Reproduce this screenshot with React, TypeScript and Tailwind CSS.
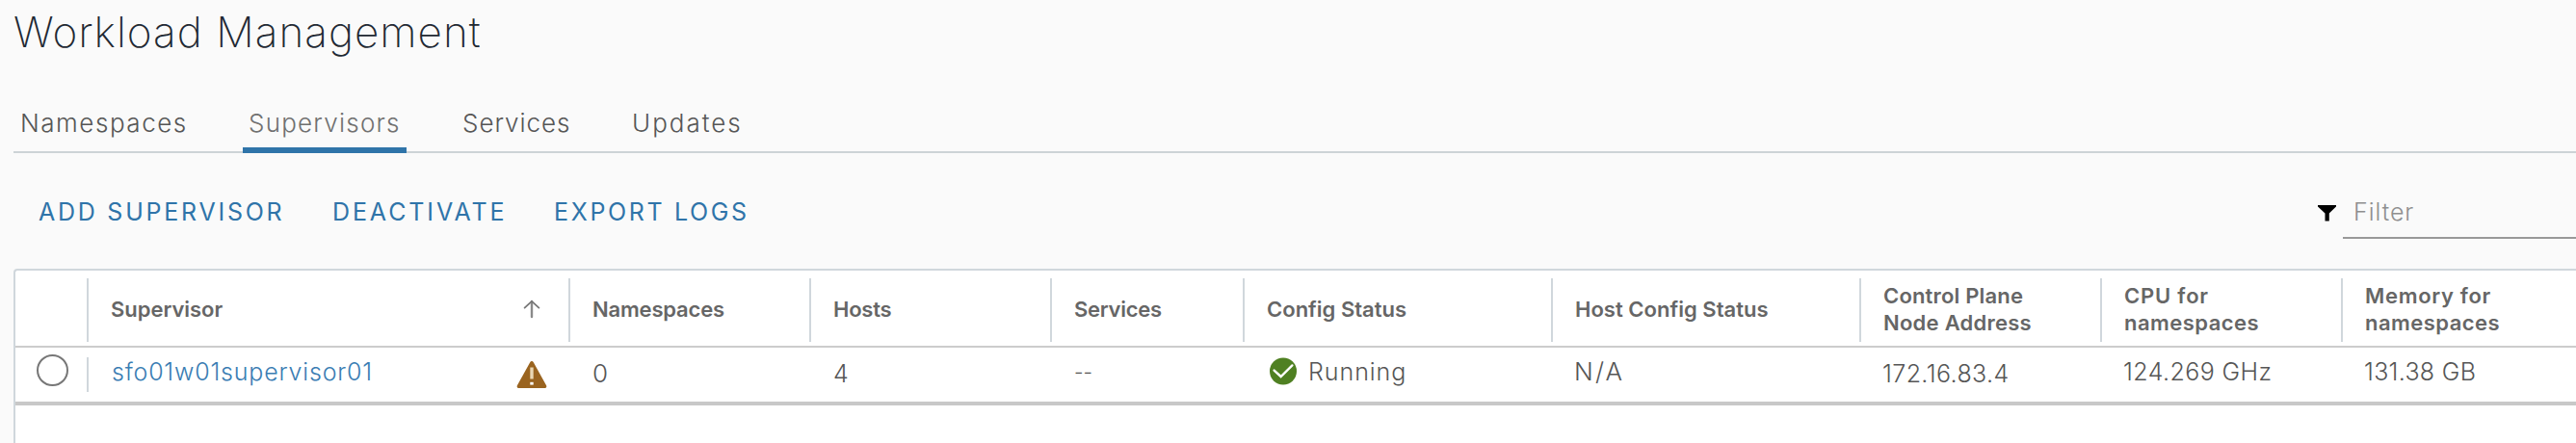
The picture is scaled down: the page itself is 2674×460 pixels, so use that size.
import type { ReactNode } from "react";

const tabs = [
  { label: "Namespaces", cls: "w-[238px] pt-px pl-[7px] tracking-[1.54px]" },
  { label: "Supervisors", cls: "w-[221px] tracking-[1.22px]", active: true },
  { label: "Services", cls: "w-[176px] pt-px pl-[7px] tracking-[0.95px]" },
  { label: "Updates", cls: "w-[176px] pt-px pl-[7px] tracking-[2px]" },
];

function HeaderCell({ width, children }: { width: string; children?: ReactNode }) {
  return (
    <div className={`${width} flex h-[66px] shrink-0 items-center border-l-2 border-[#d0d7dc] pb-[2px] pl-[23px]`}>
      {children}
    </div>
  );
}

function Cell({ width, children }: { width: string; children?: ReactNode }) {
  return <div className={`${width} flex shrink-0 pl-[25px]`}>{children}</div>;
}

function SortArrow() {
  return (
    <svg width="18" height="20" viewBox="0 0 18 20" fill="none" stroke="#777" strokeLinecap="round" strokeLinejoin="round">
      <path d="M9 18V2" strokeWidth="2.4" stroke="#8a8a8a" />
      <path d="M1.6 8.6 9 1.8l7.4 6.8" strokeWidth="1.8" />
    </svg>
  );
}

function WarningIcon() {
  return (
    <svg width="32" height="29" viewBox="0 0 32 29">
      <path d="M14.2 1.2c.8-1.5 2.8-1.5 3.6 0l13.3 24c.7 1.3-.2 2.8-1.7 2.8H2.6C1.1 28 .2 26.5.9 25.2z" fill="#9a6420" />
      <path d="M16 6.5v12" stroke="#ead7b4" strokeWidth="3.4" />
      <path d="M16 21.8v2.8" stroke="#fff" strokeWidth="3.4" />
    </svg>
  );
}

function SuccessIcon() {
  return (
    <svg width="28" height="29" viewBox="0 0 28 29">
      <circle cx="14" cy="14.5" r="14" fill="#4f8022" />
      <path d="m4.6 13.6 7 6.4L23.4 8.4" fill="none" stroke="#fff" strokeWidth="2.4" strokeLinecap="round" />
    </svg>
  );
}

export default function App() {
  return (
    <div className="h-[460px] w-full overflow-hidden bg-[#fafafa] font-['Inter',sans-serif] text-[#565656] whitespace-nowrap">
      <h1 className="pt-[7px] pl-[14px] text-[44px] leading-[52px] font-[250] tracking-[1.02px] text-[#1f2933]">
        Workload Management
      </h1>

      <nav className="mt-[52px] ml-[14px] flex h-[48px] border-b-2 border-[#cdd3d6] text-[26px] leading-[32px] font-[350]">
        {tabs.map((t) => (
          <div key={t.label} className={t.cls}>
            {t.active ? (
              <div className="h-[48px] w-[170px] border-b-6 border-[#2f74a9] pt-px pl-[6px] text-[#707070]">{t.label}</div>
            ) : (
              t.label
            )}
          </div>
        ))}
      </nav>

      <div className="flex h-[120px] text-[25px] leading-[32px] text-[#2f74a9]">
        <button className="mt-[45px] ml-[40px] h-[32px] w-[305px] text-left tracking-[2.75px]">ADD SUPERVISOR</button>
        <button className="mt-[45px] h-[32px] w-[230px] text-left tracking-[2.9px]">DEACTIVATE</button>
        <button className="mt-[45px] h-[32px] text-left tracking-[2.65px]">EXPORT LOGS</button>
        <div className="ml-auto flex w-[268px]">
          <svg className="mt-[54px]" width="19" height="17" viewBox="0 0 19 17">
            <path d="M0 0h19v1.6L11.8 8.6V16.5H7.5V8.6L0 1.6z" fill="#000" />
          </svg>
          <div className="ml-[7px] h-[89px] flex-1 border-b-2 border-[#999] pt-[45px] pl-[11px] font-[350] tracking-[0.95px] text-[#8f8f8f]">
            Filter
          </div>
        </div>
      </div>

      <div className="ml-[14px] h-[200px] rounded-tl-[4px] border-t-2 border-l-2 border-[#d0d7dc] bg-white">
        <div className="flex h-[80px] border-b-2 border-[#cccccc] pt-[8px] text-[22px] leading-[28px] font-semibold text-[#666]">
          <div className="w-[74px] shrink-0" />
          <HeaderCell width="w-[500px]">
            <span className="tracking-[-0.03px]">Supervisor</span>
            <span className="mr-[29px] ml-auto">
              <SortArrow />
            </span>
          </HeaderCell>
          <HeaderCell width="w-[250px]"><span className="tracking-[-0.18px]">Namespaces</span></HeaderCell>
          <HeaderCell width="w-[250px]"><span className="tracking-[-0.24px]">Hosts</span></HeaderCell>
          <HeaderCell width="w-[200px]"><span className="tracking-[-0.27px]">Services</span></HeaderCell>
          <HeaderCell width="w-[320px]"><span className="tracking-[0.01px]">Config Status</span></HeaderCell>
          <HeaderCell width="w-[320px]"><span className="tracking-[0.03px]">Host Config Status</span></HeaderCell>
          <HeaderCell width="w-[250px]">
            <div>
              <div className="tracking-[0.18px]">Control Plane</div>
              <div className="tracking-[0.25px]">Node Address</div>
            </div>
          </HeaderCell>
          <HeaderCell width="w-[250px]">
            <div>
              <div className="tracking-[0.8px]">CPU for</div>
              <div className="tracking-[0.45px]">namespaces</div>
            </div>
          </HeaderCell>
          <HeaderCell width="w-[244px]">
            <div>
              <div className="tracking-[0.68px]">Memory for</div>
              <div className="tracking-[0.45px]">namespaces</div>
            </div>
          </HeaderCell>
        </div>

        <div className="flex h-[60px] border-b-4 border-[#c8c8c8] pt-[9px] text-[25px] leading-[32px] font-[350]">
          <div className="w-[74px] shrink-0">
            <div className="-mt-[2px] ml-[22px] h-[33px] w-[33px] rounded-full border-2 border-[#777] bg-white" />
          </div>
          <div className="mt-px flex h-[36px] w-[500px] shrink-0 border-l-2 border-[#d0d7dc] pl-[24px]">
            <a className="-mt-px tracking-[0.8px] text-[#3a7db3]">sfo01w01supervisor01</a>
            <span className="mt-[4px] mr-[22px] ml-auto">
              <WarningIcon />
            </span>
          </div>
          <Cell width="w-[250px]"><span className="mt-[2px] text-[26px]">0</span></Cell>
          <Cell width="w-[250px]"><span className="mt-[2px]">4</span></Cell>
          <Cell width="w-[200px]"><span className="mt-px text-[21px]">--</span></Cell>
          <Cell width="w-[320px]">
            <span className="mt-px ml-[3px]"><SuccessIcon /></span>
            <span className="ml-[12px] tracking-[0.95px]">Running</span>
          </Cell>
          <Cell width="w-[320px]"><span className="-ml-px text-[26px] tracking-[2.2px]">N/A</span></Cell>
          <Cell width="w-[250px]"><span className="mt-[2px] -ml-px tracking-[0.4px]">172.16.83.4</span></Cell>
          <Cell width="w-[250px]"><span className="-ml-px tracking-[0.42px]">124.269 GHz</span></Cell>
          <Cell width="w-[244px]"><span className="-ml-px tracking-[0.3px]">131.38 GB</span></Cell>
        </div>
      </div>
    </div>
  );
}
